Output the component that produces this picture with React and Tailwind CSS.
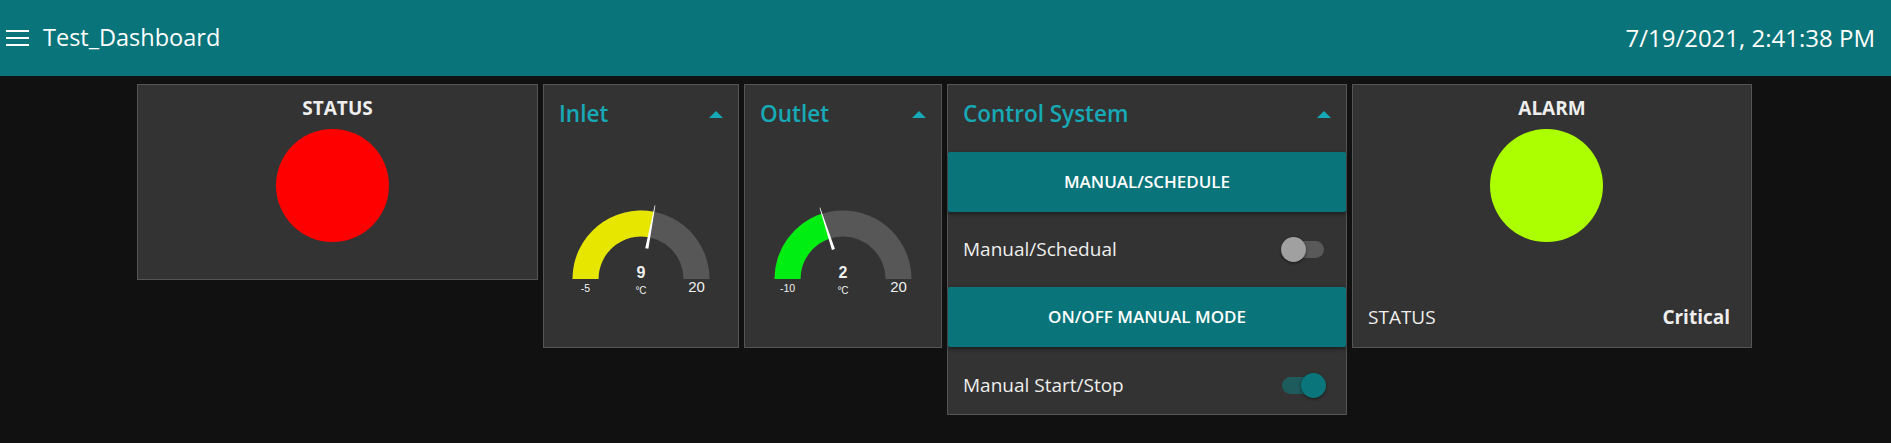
import React from "react";

const FONT = { fontFamily: '"Open Sans", "Noto Sans", sans-serif' };

function Gauge({ value, min, max, color, width }) {
  const cx = width / 2;
  const cy = 74;
  const R = 68.5;
  const r = 42.5;
  const pt = (rad, a) => [cx - rad * Math.cos(a), cy - rad * Math.sin(a)];
  const arc = (a0, a1) => {
    const [x0, y0] = pt(R, a0);
    const [x1, y1] = pt(R, a1);
    const [x2, y2] = pt(r, a1);
    const [x3, y3] = pt(r, a0);
    return `M${x0} ${y0} A${R} ${R} 0 0 1 ${x1} ${y1} L${x2} ${y2} A${r} ${r} 0 0 0 ${x3} ${y3} Z`;
  };
  const frac = (value - min) / (max - min);
  const a = frac * Math.PI;
  const perp = a + Math.PI / 2;
  const base = pt(31, a);
  const tip = pt(75, a);
  const off = (p, w) => [
    [p[0] - w * Math.cos(perp), p[1] - w * Math.sin(perp)],
    [p[0] + w * Math.cos(perp), p[1] + w * Math.sin(perp)],
  ];
  const [b1, b2] = off(base, 1.6);
  const [t1, t2] = off(tip, 0.3);
  const needle = `M${b1[0]} ${b1[1]} L${t1[0]} ${t1[1]} L${t2[0]} ${t2[1]} L${b2[0]} ${b2[1]} Z`;
  return (
    <svg width={width} height={100} className="block">
      <path d={arc(0, Math.PI)} fill="#575757" />
      <path d={arc(0, a)} fill={color} />
      <path d={needle} fill="#ffffff" />
      <g fontFamily='"Liberation Sans", Arial, sans-serif' fill="#f0f0f0" textAnchor="middle">
        <text x={cx} y={cy - 1.5} fontSize="16" fontWeight="bold">
          {value}
        </text>
        <text x={cx} y={cy + 14.5} fontSize="10">
          °C
        </text>
        <text x={cx - 55.5} y={cy + 12.7} fontSize="10.5">
          {min}
        </text>
        <text x={cx + 55.5} y={cy + 12.7} fontSize="15">
          {max}
        </text>
      </g>
    </svg>
  );
}

function Caret() {
  return (
    <svg width="14" height="7" viewBox="0 0 14 7" className="block">
      <path d="M0 7 L7 0 L14 7 Z" fill="#17a9b6" />
    </svg>
  );
}

function GroupTitle({ title }) {
  return (
    <div className="flex h-[58px] items-center justify-between pl-[15px] pr-[15px]">
      <span className="text-[22.5px] font-semibold text-[#17a9b6] leading-none">{title}</span>
      <Caret />
    </div>
  );
}

function Toggle({ on }) {
  return (
    <div className="relative h-[25px] w-[45px]">
      <div
        className={
          on
            ? "absolute left-[1px] top-[4px] h-[17px] w-[42px] rounded-full bg-[#1e5b5d]"
            : "absolute left-[1px] top-[4px] h-[17px] w-[42px] rounded-full bg-[#595959]"
        }
      />
      <div
        className={
          on
            ? "absolute left-[20px] top-0 h-[25px] w-[25px] rounded-full bg-[#0a767b] shadow-[0_1px_3px_rgba(0,0,0,0.5)]"
            : "absolute left-0 top-0 h-[25px] w-[25px] rounded-full bg-[#a0a0a0] shadow-[0_1px_3px_rgba(0,0,0,0.5)]"
        }
      />
    </div>
  );
}

function Button({ label }) {
  return (
    <div className="flex h-[60px] items-center justify-center rounded-[2px] bg-[#097479] text-[17px] font-semibold text-white shadow-[0_2px_4px_rgba(0,0,0,0.45)]">
      {label}
    </div>
  );
}

export default function App() {
  return (
    <div className="min-h-screen w-full bg-[#111111] text-[#eeeeee]" style={FONT}>
      <header className="flex h-[76px] items-center justify-between bg-[#097479] pr-[16px] text-white">
        <div className="flex items-center">
          <div className="ml-[6px] flex w-[23px] flex-col gap-[4.5px]">
            <div className="h-[2.5px] bg-white" />
            <div className="h-[2.5px] bg-white" />
            <div className="h-[2.5px] bg-white" />
          </div>
          <span className="ml-[14px] text-[23.5px] leading-none">Test_Dashboard</span>
        </div>
        <span className="text-[24px] leading-none">7/19/2021, 2:41:38 PM</span>
      </header>

      <div className="flex items-start gap-[5px] pl-[137px] pt-[8px]">
        {/* STATUS */}
        <div className="flex h-[196px] w-[401px] flex-col items-center border border-[#555555] bg-[#333333]">
          <div className="mt-[12px] text-[19px] font-bold leading-[22px]">STATUS</div>
          <div className="mr-[11px] mt-[10px] h-[113px] w-[113px] rounded-full bg-[#ff0000]" />
        </div>

        {/* Inlet */}
        <div className="h-[264px] w-[196px] border border-[#555555] bg-[#333333]">
          <GroupTitle title="Inlet" />
          <div className="mt-[62px]">
            <Gauge value={9} min={-5} max={20} color="#e6e600" width={194} />
          </div>
        </div>

        {/* Outlet */}
        <div className="h-[264px] w-[198px] border border-[#555555] bg-[#333333]">
          <GroupTitle title="Outlet" />
          <div className="mt-[62px]">
            <Gauge value={2} min={-10} max={20} color="#00ee11" width={196} />
          </div>
        </div>

        {/* Control System */}
        <div className="flex h-[331px] w-[400px] flex-col border border-[#555555] bg-[#333333]">
          <div className="flex h-[59px] items-center justify-between pl-[15px] pr-[15px]">
            <span className="text-[22.5px] font-semibold text-[#17a9b6] leading-none">Control System</span>
            <Caret />
          </div>
          <div className="h-[8px]" />
          <Button label="MANUAL/SCHEDULE" />
          <div className="flex h-[75px] items-center justify-between pl-[15px] pr-[20px]">
            <span className="text-[19px]">Manual/Schedual</span>
            <Toggle on={false} />
          </div>
          <Button label="ON/OFF MANUAL MODE" />
          <div className="flex flex-1 items-center justify-between pl-[15px] pr-[20px] pt-[10px]">
            <span className="text-[19px]">Manual Start/Stop</span>
            <Toggle on={true} />
          </div>
        </div>

        {/* ALARM */}
        <div className="flex h-[264px] w-[400px] flex-col items-center border border-[#555555] bg-[#333333]">
          <div className="mt-[12px] text-[19px] font-bold leading-[22px]">ALARM</div>
          <div className="mr-[11px] mt-[10px] h-[113px] w-[113px] rounded-full bg-[#acff00]" />
          <div className="mt-auto mb-[16px] flex w-full items-center justify-between pl-[15px] pr-[21px]">
            <span className="text-[19px]">STATUS</span>
            <span className="text-[19px] font-bold">Critical</span>
          </div>
        </div>
      </div>
    </div>
  );
}
